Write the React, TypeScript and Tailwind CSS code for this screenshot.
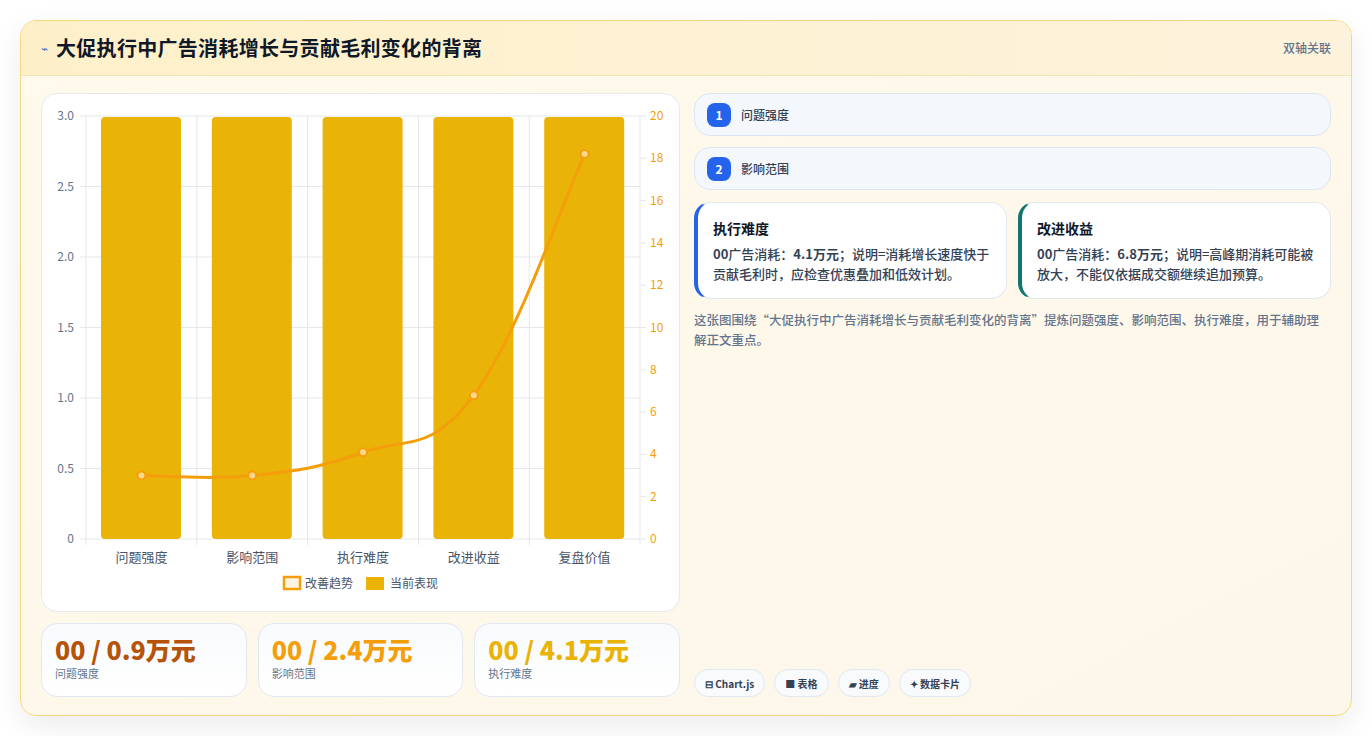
import React from "react";

const F = { fontFamily: '"Noto Sans CJK SC","Noto Sans",sans-serif' };

function Chart() {
  const x0 = 44, x1 = 598, yT = 22, yB = 445;
  const cw = (x1 - x0) / 5;
  const cats = ["问题强度", "影响范围", "执行难度", "改进收益", "复盘价值"];
  const vals = [3.0, 3.0, 4.1, 6.8, 18.2];
  const pts = vals.map((v, i) => [x0 + cw * (i + 0.5), yB - (v / 20) * (yB - yT)]);
  let d = `M${pts[0][0]},${pts[0][1]}`;
  for (let i = 0; i < pts.length - 1; i++) {
    const p0 = pts[Math.max(0, i - 1)], p1 = pts[i], p2 = pts[i + 1], p3 = pts[Math.min(pts.length - 1, i + 2)];
    const t = 0.2;
    const c1 = [p1[0] + (p2[0] - p0[0]) * t, p1[1] + (p2[1] - p0[1]) * t];
    const c2 = [p2[0] - (p3[0] - p1[0]) * t, p2[1] - (p3[1] - p1[1]) * t];
    d += ` C${c1[0]},${c1[1]} ${c2[0]},${c2[1]} ${p2[0]},${p2[1]}`;
  }
  const leftTicks = [0, 0.5, 1, 1.5, 2, 2.5, 3];
  const rightTicks = [0, 2, 4, 6, 8, 10, 12, 14, 16, 18, 20];
  return (
    <svg width="639" height="519" style={{ fontFamily: '"Noto Sans CJK SC",sans-serif' }}>
      {leftTicks.map((t) => {
        const y = yB - (t / 3) * (yB - yT);
        return (
          <g key={t}>
            <line x1={x0 - 6} x2={x1} y1={y} y2={y} stroke="#e5e7eb" />
            <text x={32} y={y + 4} textAnchor="end" fontSize="12" fill="#64748b">{t === 0 ? "0" : t.toFixed(1)}</text>
          </g>
        );
      })}
      {rightTicks.map((t) => {
        const y = yB - (t / 20) * (yB - yT);
        return (
          <g key={t}>
            <line x1={x1} x2={x1 + 6} y1={y} y2={y} stroke="#e5e7eb" />
            <text x={608} y={y + 4} fontSize="12" fill="#f59e0b">{t}</text>
          </g>
        );
      })}
      {[0, 1, 2, 3, 4, 5].map((i) => (
        <line key={i} x1={x0 + cw * i} x2={x0 + cw * i} y1={yT} y2={yB + 6} stroke="#e5e7eb" />
      ))}
      {cats.map((c, i) => (
        <g key={c}>
          <rect x={x0 + cw * i + 15} y={yT + 1} width={80} height={yB - yT - 1} rx="4" fill="#eab308" />
          <text x={x0 + cw * (i + 0.5)} y={468} textAnchor="middle" fontSize="13" fill="#475569">{c}</text>
        </g>
      ))}
      <path d={d} fill="none" stroke="#f59e0b" strokeWidth="3" />
      {pts.map((p, i) => (
        <circle key={i} cx={p[0]} cy={p[1]} r="4" fill="#fcd98a" stroke="#f59e0b" strokeWidth="2" />
      ))}
      <rect x={242} y={483} width={16} height={12} fill="#fef3e0" stroke="#f59e0b" strokeWidth="2.5" />
      <text x={263} y={494} fontSize="12" fill="#475569">改善趋势</text>
      <rect x={324} y={483} width={18} height={13} fill="#eab308" />
      <text x={348} y={494} fontSize="12" fill="#475569">当前表现</text>
    </svg>
  );
}

export default function App() {
  return (
    <div className="w-[1372px] h-[736px] bg-white p-5" style={F}>
      <div className="h-[696px] rounded-2xl border border-[#f7d77c] bg-gradient-to-br from-[#fffaec] to-[#fdf6ea] shadow-[0_10px_30px_rgba(0,0,0,0.08)] overflow-hidden flex flex-col">
        <div className="h-[55px] shrink-0 flex items-center justify-between px-5 bg-gradient-to-r from-[#fdf0c9] to-[#fdf3dc] border-b border-[#f3e3b5]">
          <div className="flex items-center gap-2">
            <span className="text-[12px] text-[#4f6ee0]">⌁</span>
            <span className="text-[20px] font-bold text-[#111827] tracking-[0.3px]">大促执行中广告消耗增长与贡献毛利变化的背离</span>
          </div>
          <span className="text-[12px] text-[#64748b] font-medium">双轴关联</span>
        </div>
        <div className="flex-1 flex gap-[14px] px-5 pt-[17px] pb-[19px]">
          <div className="w-[639px] flex flex-col gap-[11px]">
            <div className="h-[519px] rounded-2xl bg-white border border-[#e6e9ef]">
              <Chart />
            </div>
            <div className="flex gap-[11px]">
              {[
                ["00 / 0.9万元", "问题强度", "text-[#b45309]"],
                ["00 / 2.4万元", "影响范围", "text-[#f59e0b]"],
                ["00 / 4.1万元", "执行难度", "text-[#eab308]"],
              ].map(([v, l, c]) => (
                <div key={l} className="flex-1 h-[74px] rounded-2xl border border-[#e2e8f0] bg-gradient-to-b from-[#f8fafc] to-white px-[13px] pt-[9px]">
                  <div className={`text-[25px] font-extrabold leading-[32px] ${c}`}>{v}</div>
                  <div className="text-[11px] text-[#64748b]">{l}</div>
                </div>
              ))}
            </div>
          </div>
          <div className="flex-1 flex flex-col">
            {["问题强度", "影响范围"].map((t, i) => (
              <div key={t} className="h-[43px] mb-[11px] rounded-2xl border border-[#dbe5f3] bg-[#f4f8fd] flex items-center px-3 gap-[10px]">
                <span className="w-[24px] h-[24px] rounded-lg bg-[#2563eb] text-white text-[12px] font-bold flex items-center justify-center">{i + 1}</span>
                <span className="text-[12px] text-[#334155] font-medium">{t}</span>
              </div>
            ))}
            <div className="flex gap-[11px] mt-[1px]">
              {[
                ["执行难度", "4.1万元", "消耗增长速度快于贡献毛利时，应检查优惠叠加和低效计划。", "border-l-[#2563eb]"],
                ["改进收益", "6.8万元", "高峰期消耗可能被放大，不能仅依据成交额继续追加预算。", "border-l-[#0f766e]"],
              ].map(([t, v, s, b]) => (
                <div key={t} className={`flex-1 h-[97px] rounded-2xl bg-white border border-[#e2e8f0] border-l-4 ${b} pl-[15px] pr-3 pt-[15px]`}>
                  <div className="text-[14px] font-bold text-[#111827]">{t}</div>
                  <div className="text-[13px] leading-[20px] text-[#334155] font-medium mt-[5px]">
                    <b>00</b>广告消耗：<b>{v}</b>；说明=<span>{s}</span>
                  </div>
                </div>
              ))}
            </div>
            <p className="text-[12.5px] leading-[20px] text-[#64748b] font-medium mt-[11px]">
              这张图围绕“大促执行中广告消耗增长与贡献毛利变化的背离”提炼问题强度、影响范围、执行难度，用于辅助理解正文重点。
            </p>
            <div className="mt-auto flex gap-[9px]">
              {["⊟ Chart.js", "■ 表格", "▰ 进度", "✦ 数据卡片"].map((t) => (
                <span key={t} className="h-[28px] px-[10px] rounded-full border border-[#e2e8f0] bg-[#f8fafc] text-[10px] font-bold text-[#334155] flex items-center">{t}</span>
              ))}
            </div>
          </div>
        </div>
      </div>
    </div>
  );
}
